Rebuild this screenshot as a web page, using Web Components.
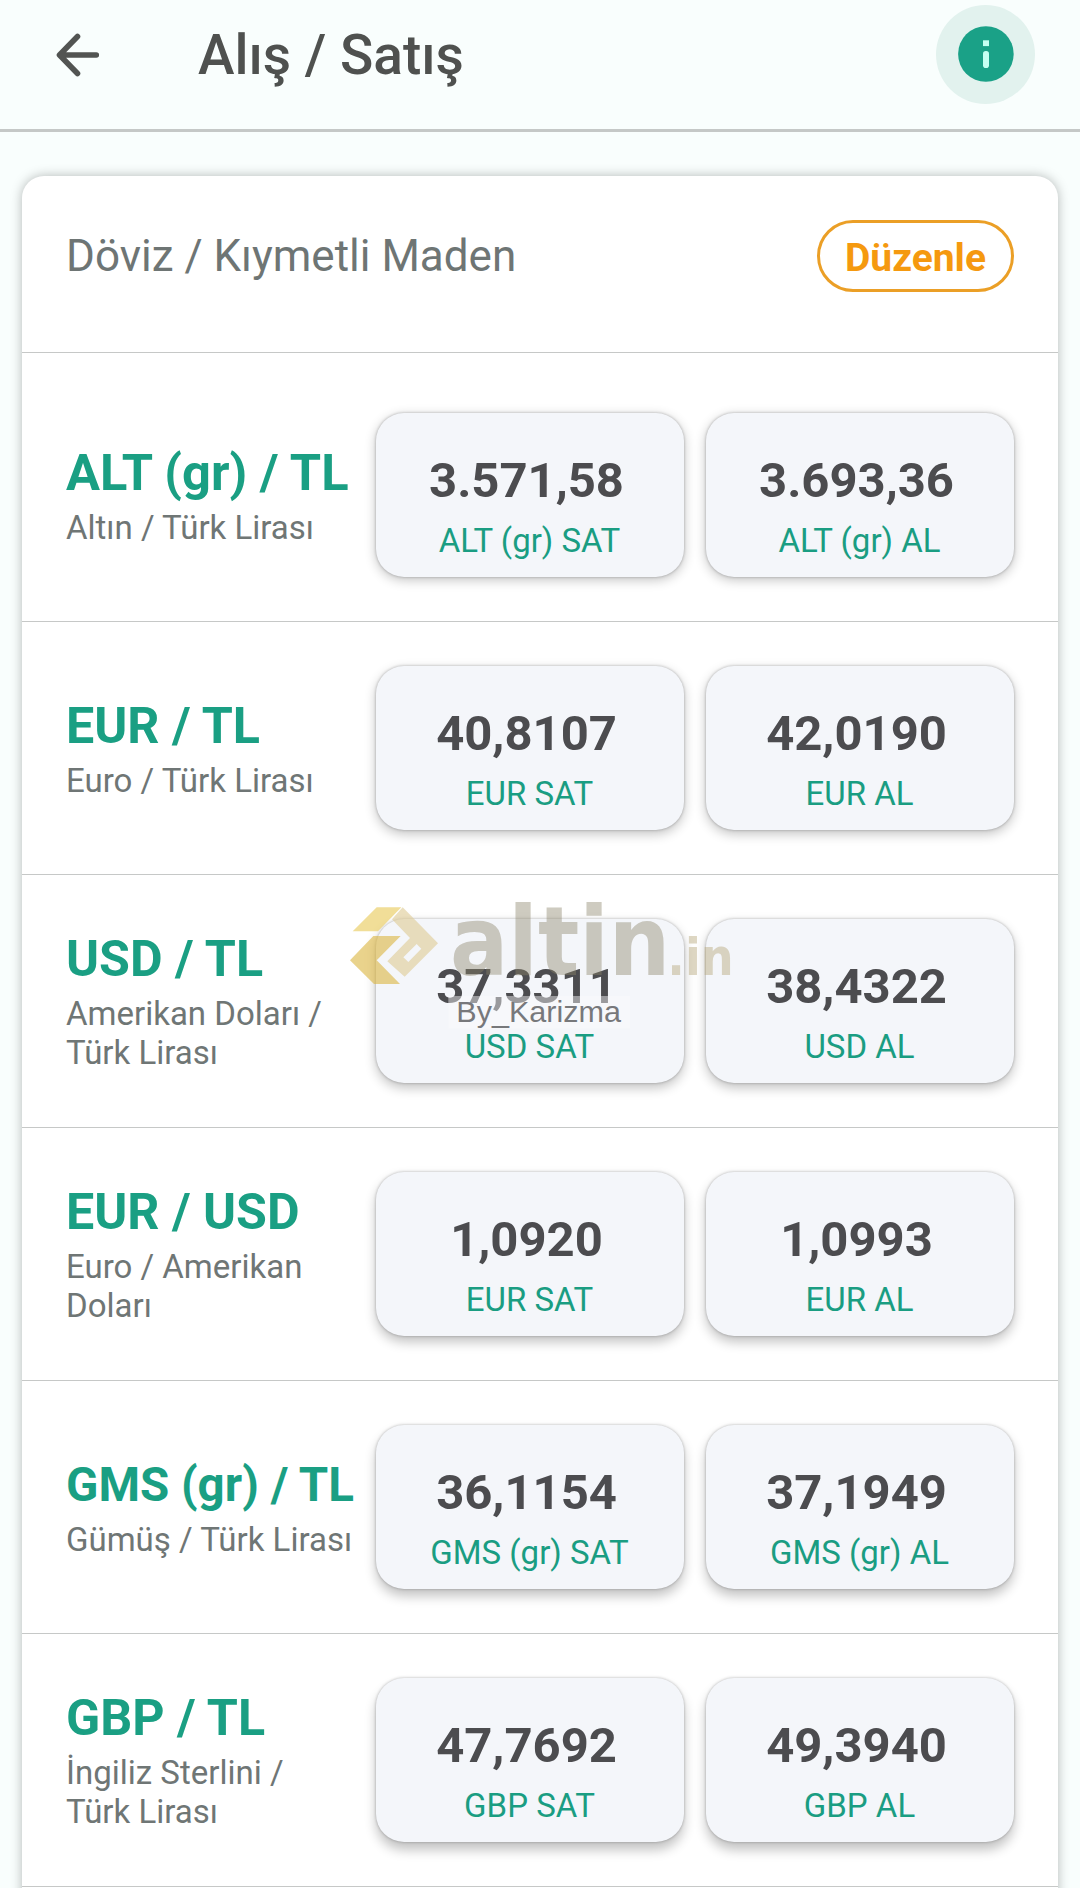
<!DOCTYPE html>
<html lang="tr">
<head>
<meta charset="utf-8">
<title>Alış / Satış</title>
<style>
  body {
    margin: 0;
    background: #f9fefd;
    font-family: Roboto, "Liberation Sans", sans-serif;
    height: 1888px;
    overflow: hidden;
    position: relative;
  }
</style>
</head>
<body>
<app-bar title="Alış / Satış"></app-bar>
<rate-card title="Döviz / Kıymetli Maden" action="Düzenle">
  <rate-row class="first" pair="ALT (gr) / TL" sell="3.571,58" buy="3.693,36" unit="ALT (gr)" lift="3">Altın / Türk Lirası</rate-row>
  <rate-row pair="EUR / TL" sell="40,8107" buy="42,0190" unit="EUR" lift="4">Euro / Türk Lirası</rate-row>
  <rate-row pair="USD / TL" sell="37,3311" buy="38,4322" unit="USD" lift="5">Amerikan Doları /<br>Türk Lirası</rate-row>
  <rate-row pair="EUR / USD" sell="1,0920" buy="1,0993" unit="EUR" lift="6">Euro / Amerikan<br>Doları</rate-row>
  <rate-row class="long" pair="GMS (gr) / TL" sell="36,1154" buy="37,1949" unit="GMS (gr)" lift="7">Gümüş / Türk Lirası</rate-row>
  <rate-row pair="GBP / TL" sell="47,7692" buy="49,3940" unit="GBP" lift="8">İngiliz Sterlini /<br>Türk Lirası</rate-row>
</rate-card>
<water-mark></water-mark>

<script>
class AppBar extends HTMLElement {
  constructor() {
    super();
    this.attachShadow({ mode: "open" });
  }

  connectedCallback() {
    this.shadowRoot.innerHTML = `
<style>
  :host {
    display: flex;
    box-sizing: border-box;
    height: 132px;
    padding: 5px 45px 0 56px;
    align-items: flex-start;
    border-bottom: 3px solid #c5c8c7;
  }
  .back {
    width: 44px;
    height: 44px;
    margin-top: 28px;
  }
  h1 {
    flex: 1;
    margin: 17px 0 0 98px;
    font-size: 55px;
    line-height: 66px;
    font-weight: 500;
    color: #4f514f;
  }
  .info {
    width: 99px;
    height: 99px;
  }
  svg {
    display: block;
  }
</style>
<svg class="back" viewBox="0 0 44 44" fill="none" stroke="#525452" stroke-width="5.6" stroke-linecap="round" stroke-linejoin="round">
  <path d="M40.3 22H4M21.5 3.5L3.5 22L21.5 40.5"/>
</svg>
<h1>${this.getAttribute("title")}</h1>
<svg class="info" viewBox="0 0 99 99">
  <circle cx="49.5" cy="49.5" r="49.5" fill="#e2f2ee"/>
  <circle cx="49.9" cy="49" r="27.8" fill="#1aa187"/>
  <rect x="47" y="35.3" width="6" height="5.8" fill="#c5fff2"/>
  <rect x="47" y="46" width="6" height="17" rx="2.8" fill="#c5fff2"/>
</svg>`;
  }
}

class RateCard extends HTMLElement {
  constructor() {
    super();
    this.attachShadow({ mode: "open" });
  }

  connectedCallback() {
    this.shadowRoot.innerHTML = `
<style>
  :host {
    display: block;
    margin: 44px 22px 0;
    background: #fff;
    border-radius: 22px;
    box-shadow: 0 0 12px rgba(0, 0, 0, 0.28);
    height: 1760px;
  }
  header {
    display: flex;
    box-sizing: border-box;
    height: 177px;
    padding: 44px 44px 0;
    justify-content: space-between;
    align-items: flex-start;
    border-bottom: 1px solid #c6c8c7;
  }
  h2 {
    margin: 10px 0 0;
    font-size: 44px;
    line-height: 53px;
    font-weight: 400;
    color: #6e7574;
  }
  button {
    box-sizing: border-box;
    width: 197px;
    height: 72px;
    padding: 3px 0 0;
    border: 3px solid #eb9f26;
    border-radius: 36px;
    background: none;
    font: 700 39px/46px Roboto, sans-serif;
    color: #f5990f;
  }
</style>
<header>
  <h2>${this.getAttribute("title")}</h2>
  <button>${this.getAttribute("action")}</button>
</header>
<slot></slot>`;
  }
}

class RateTile extends HTMLElement {
  constructor() {
    super();
    this.attachShadow({ mode: "open" });
  }

  connectedCallback() {
    this.shadowRoot.innerHTML = `
<style>
  :host {
    display: flex;
    flex-direction: column;
    align-items: center;
    box-sizing: border-box;
    width: 308px;
    height: 164px;
    padding-top: 39px;
    border-radius: 28px;
    background: #f4f6fa;
    box-shadow: 0 0 3px rgba(0, 0, 0, 0.28), 0 var(--lift, 4px) 12px rgba(0, 0, 0, 0.24);
  }
  .value {
    margin-right: 7px;
    font-size: 49px;
    line-height: 58px;
    font-weight: 700;
    color: #4c4c4f;
  }
  .label {
    margin: 11px 1px 0 0;
    font-size: 33px;
    line-height: 39px;
    color: #1a9d82;
  }
</style>
<span class="value">${this.getAttribute("value")}</span>
<span class="label"><slot></slot></span>`;
  }
}

class RateRow extends HTMLElement {
  constructor() {
    super();
    this.attachShadow({ mode: "open" });
  }

  connectedCallback() {
    const unit = this.getAttribute("unit");
    this.style.setProperty("--lift", this.getAttribute("lift") + "px");
    this.shadowRoot.innerHTML = `
<style>
  :host {
    display: flex;
    align-items: center;
    box-sizing: border-box;
    height: 253px;
    padding: 0 44px;
    border-bottom: 1px solid #c6c8c7;
  }
  :host(.first) {
    height: 269px;
    padding-top: 16px;
  }
  .name {
    width: 310px;
    white-space: nowrap;
  }
  .pair {
    font-size: 50.2px;
    line-height: 60px;
    font-weight: 700;
    color: #1a9f83;
  }
  :host(.first) .pair {
    font-size: 50.6px;
  }
  /* long pair names are set smaller to stay clear of the tiles */
  :host(.long) .pair {
    font-size: 47.5px;
  }
  .desc {
    margin-top: 6px;
    font-size: 33px;
    line-height: 38.7px;
    color: #6f7675;
  }
  .tiles {
    display: flex;
    gap: 22px;
  }
</style>
<div class="name">
  <div class="pair">${this.getAttribute("pair")}</div>
  <div class="desc"><slot></slot></div>
</div>
<div class="tiles">
  <rate-tile value="${this.getAttribute("sell")}">${unit} SAT</rate-tile>
  <rate-tile value="${this.getAttribute("buy")}">${unit} AL</rate-tile>
</div>`;
  }
}

// Logo and signature lying over the list
class WaterMark extends HTMLElement {
  constructor() {
    super();
    this.attachShadow({ mode: "open" });
    this.shadowRoot.innerHTML = `
<style>
  :host {
    display: block;
    position: absolute;
    left: 330px;
    top: 870px;
    width: 420px;
    height: 240px;
    pointer-events: none;
  }
  .brand {
    font-family: "DejaVu Sans Condensed", "DejaVu Sans", sans-serif;
    font-stretch: condensed;
    font-weight: 700;
  }
</style>
<svg width="420" height="240" viewBox="0 0 1260 720">
  <g opacity="0.6">
    <path fill="#e9c954" d="M140 112H214L144 184H68Z"/>
    <path fill="#dcb640" d="M130 198H212L140 271L210 342H132L60 271Z"/>
    <path fill="#dfcb94" fill-rule="evenodd" d="M218 112L324 220L224 320L172 274L240 204L186 148ZM260 222L220 262L235 276L274 236Z"/>
  </g>
  <g class="brand">
    <text x="360" y="315" font-size="287" textLength="661" lengthAdjust="spacingAndGlyphs" fill="#8b8468" fill-opacity="0.42">altin</text>
    <text x="1012" y="315" font-size="154" textLength="199" lengthAdjust="spacingAndGlyphs" fill="#b5a67a" fill-opacity="0.45">.in</text>
  </g>
  <rect x="355" y="378" width="545" height="98" fill="#fbfbfd" fill-opacity="0.45"/>
  <text x="379" y="457" font-family="Liberation Sans, Arial, sans-serif" font-size="89" textLength="494" lengthAdjust="spacingAndGlyphs" fill="#77787b">By_Karizma</text>
</svg>`;
  }
}

window.customElements.define("app-bar", AppBar);
window.customElements.define("rate-card", RateCard);
window.customElements.define("rate-tile", RateTile);
window.customElements.define("rate-row", RateRow);
window.customElements.define("water-mark", WaterMark);
</script>
</body>
</html>
